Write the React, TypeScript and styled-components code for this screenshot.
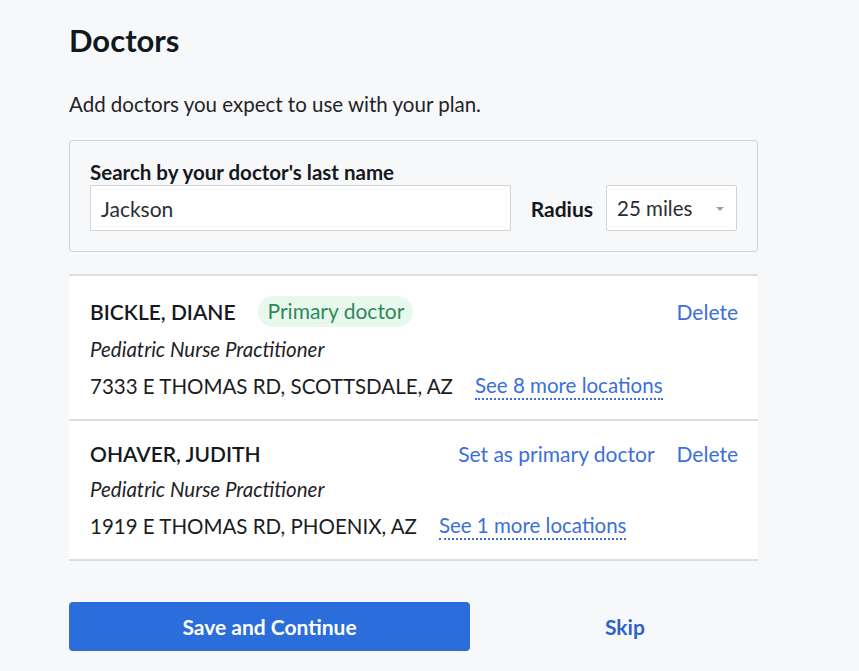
import React, { ReactElement } from 'react';
import styled, { createGlobalStyle } from 'styled-components';

const GlobalStyle = createGlobalStyle`
  body {
    margin: 0;
    background: #f7f8fa;
    font-family: Lato, 'Open Sans', Arial, sans-serif;
    color: #1b1f24;
  }
`;

const StyledPage = styled.div`
  width: 689px;
  padding: 22px 0 20px 69px;
  display: flex;
  flex-direction: column;
`;

const StyledTitle = styled.h1`
  margin: 0;
  font-size: 31px;
  font-weight: 700;
  line-height: 36px;
  color: #101820;
`;

const StyledIntro = styled.p`
  margin: 33px 0 0;
  font-size: 20.5px;
  line-height: 26px;
  color: #1f2328;
`;

const StyledSearchPanel = styled.div`
  margin-top: 23px;
  border: 1px solid #cfd4d8;
  border-radius: 3px;
  padding: 19px 20px 20px 20px;
  display: flex;
  align-items: flex-end;
  gap: 20px;
`;

const StyledField = styled.label`
  display: flex;
  flex-direction: column;
  gap: 1px;
  width: 421px;
`;

const StyledLabel = styled.span`
  font-size: 20.5px;
  font-weight: 700;
  line-height: 24px;
  color: #15191e;
`;

const StyledInput = styled.div`
  box-sizing: border-box;
  height: 46px;
  background: #fff;
  border: 1px solid #cfd4d8;
  border-radius: 2px;
  display: flex;
  align-items: center;
  padding: 0 10px;
  font-size: 21px;
  color: #2a2e33;
`;

const StyledRadius = styled.div`
  display: flex;
  align-items: center;
  gap: 13px;
`;

const StyledRadiusLabel = styled.span`
  font-size: 21px;
  font-weight: 700;
  color: #15191e;
`;

const StyledSelect = styled.div`
  box-sizing: border-box;
  width: 131px;
  height: 46px;
  background: #fff;
  border: 1px solid #cfd4d8;
  border-radius: 2px;
  display: flex;
  align-items: center;
  justify-content: space-between;
  padding: 0 12px 0 10px;
  font-size: 20.5px;
  color: #2a2e33;
`;

const StyledCaret = styled.span`
  width: 0;
  height: 0;
  margin-top: 2px;
  border-left: 4.5px solid transparent;
  border-right: 4.5px solid transparent;
  border-top: 4px solid #9aa0a6;
`;

const StyledList = styled.div`
  margin-top: 22px;
  border-top: 2px solid #dadfe0;
  background: #fff;
`;

const StyledDoctor = styled.div`
  padding: 20px 20px 19px 21px;
  border-bottom: 2px solid #dadfe0;
  display: flex;
  flex-direction: column;
`;

const StyledRow = styled.div<{ $gap?: number }>`
  display: flex;
  align-items: center;
  gap: 22px;
  margin-top: ${(p) => p.$gap ?? 0}px;
  font-size: 20.5px;
  line-height: 26px;
  color: #1a1e23;
`;

const StyledName = styled.span`
  font-size: 21px;
  font-weight: 600;
  color: #15191e;
  flex: 0 0 auto;
`;

const StyledBadge = styled.span`
  background: #e9f8ee;
  color: #2c8a58;
  border-radius: 16px;
  padding: 2px 9px 3px 10px;
  font-size: 21px;
  line-height: 26px;
`;

const StyledActions = styled.div`
  margin-left: auto;
  display: flex;
  gap: 22px;
  font-size: 21px;
`;

const StyledLink = styled.a`
  color: #3b6fd9;
  text-decoration: none;
  cursor: pointer;
`;

const StyledSpecialty = styled.div`
  margin-top: 10px;
  font-style: italic;
  font-size: 20.5px;
  line-height: 24px;
  color: #1f2328;
`;

const StyledMore = styled.a`
  color: #3b6fd9;
  border-bottom: 2px dotted #3b6fd9;
  cursor: pointer;
`;

const StyledFooter = styled.div`
  margin-top: 41px;
  display: flex;
  align-items: center;
`;

const StyledPrimaryButton = styled.button`
  width: 401px;
  height: 49px;
  background: #2a6ddb;
  border: none;
  border-radius: 4px;
  color: #fff;
  font-family: inherit;
  font-size: 21px;
  font-weight: 700;
`;

const StyledSkip = styled.button`
  margin-left: 135px;
  padding: 0;
  background: none;
  border: none;
  color: #2f62c9;
  font-family: inherit;
  font-size: 21px;
  font-weight: 700;
`;

type Doctor = {
  name: string;
  primary: boolean;
  specialty: string;
  address: string;
  more: number;
};

const doctors: Doctor[] = [
  {
    name: 'BICKLE, DIANE',
    primary: true,
    specialty: 'Pediatric Nurse Practitioner',
    address: '7333 E THOMAS RD, SCOTTSDALE, AZ',
    more: 8,
  },
  {
    name: 'OHAVER, JUDITH',
    primary: false,
    specialty: 'Pediatric Nurse Practitioner',
    address: '1919 E THOMAS RD, PHOENIX, AZ',
    more: 1,
  },
];

const App = (): ReactElement => {
  return (
    <>
      <GlobalStyle />
      <StyledPage>
        <StyledTitle>Doctors</StyledTitle>
        <StyledIntro>Add doctors you expect to use with your plan.</StyledIntro>
        <StyledSearchPanel>
          <StyledField>
            <StyledLabel>Search by your doctor's last name</StyledLabel>
            <StyledInput>Jackson</StyledInput>
          </StyledField>
          <StyledRadius>
            <StyledRadiusLabel>Radius</StyledRadiusLabel>
            <StyledSelect>
              25 miles
              <StyledCaret />
            </StyledSelect>
          </StyledRadius>
        </StyledSearchPanel>
        <StyledList>
          {doctors.map((d) => (
            <StyledDoctor key={d.name}>
              <StyledRow>
                <StyledName>{d.name}</StyledName>
                {d.primary && <StyledBadge>Primary doctor</StyledBadge>}
                <StyledActions>
                  {!d.primary && <StyledLink>Set as primary doctor</StyledLink>}
                  <StyledLink>Delete</StyledLink>
                </StyledActions>
              </StyledRow>
              <StyledSpecialty>{d.specialty}</StyledSpecialty>
              <StyledRow $gap={11}>
                <span>{d.address}</span>
                <StyledMore>See {d.more} more locations</StyledMore>
              </StyledRow>
            </StyledDoctor>
          ))}
        </StyledList>
        <StyledFooter>
          <StyledPrimaryButton>Save and Continue</StyledPrimaryButton>
          <StyledSkip>Skip</StyledSkip>
        </StyledFooter>
      </StyledPage>
    </>
  );
};

export default App;
